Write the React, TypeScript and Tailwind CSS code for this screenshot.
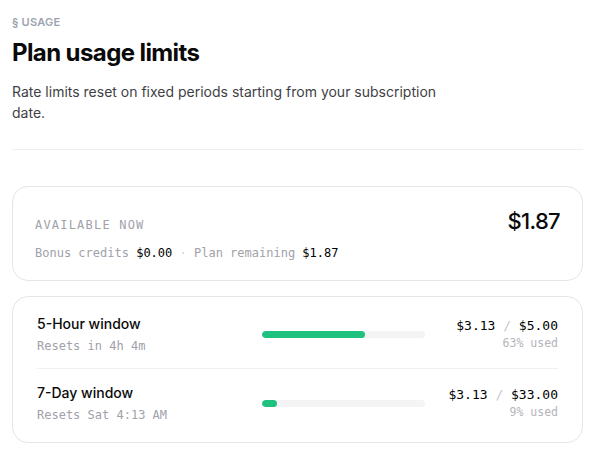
const sans = "font-['Inter','Noto_Sans',sans-serif]";
const mono = "font-['DejaVu_Sans_Mono','Liberation_Mono',monospace]";

type Window = {
  name: string;
  resets: string;
  used: string;
  limit: string;
  pct: number;
};

const windows: Window[] = [
  { name: "5-Hour window", resets: "Resets in 4h 4m", used: "$3.13", limit: "$5.00", pct: 63 },
  { name: "7-Day window", resets: "Resets Sat 4:13 AM", used: "$3.13", limit: "$33.00", pct: 9 },
];

export default function App() {
  return (
    <div className={`min-h-[468px] bg-white pl-3 pr-5 pt-[15px] ${sans}`}>
      {/* Header */}
      <section className="pb-[26px] border-b border-[#f0f0f2]">
        <div className="text-[11px] font-semibold text-[#9ca3af] leading-[14px] tracking-[0.02em]">§ USAGE</div>
        <h1 className="mt-[9px] text-[24px] leading-[30px] font-bold text-[#0a0a0a] tracking-[-0.025em]">
          Plan usage limits
        </h1>
        <p className="mt-[13px] max-w-[440px] text-[14px] leading-[21px] text-[#3f3f46]">
          Rate limits reset on fixed periods starting from your subscription date.
        </p>
      </section>

      {/* Available now */}
      <section className="mt-[36px] rounded-[16px] border border-[#e5e5e8] px-[22px] pt-[20px] pb-[19px]">
        <div className="flex items-baseline justify-between h-[28px]">
          <span className={`${mono} text-[12px] tracking-[0.1em] text-[#a1a1aa]`}>AVAILABLE NOW</span>
          <span className="text-[22px] leading-[28px] font-medium text-[#0a0a0a] tracking-[-0.03em]">$1.87</span>
        </div>
        <div className={`mt-[10px] ${mono} text-[12px] leading-[16px] text-[#a1a1aa]`}>
          Bonus credits <span className="text-[#000]">$0.00</span>
          <span className="text-[#d4d4d8]"> · </span>
          Plan remaining <span className="text-[#000]">$1.87</span>
        </div>
      </section>

      {/* Windows */}
      <section className="mt-[15px] rounded-[16px] border border-[#e5e5e8] px-[24px] pt-[3px] pb-[5px]">
        {windows.map((w, i) => (
          <div
            key={w.name}
            className={`flex items-center py-[14px] ${i > 0 ? "border-t border-[#f0f0f2]" : ""}`}
          >
            <div className="w-[225px]">
              <div className="text-[14px] leading-[20px] font-medium text-[#0a0a0a]">{w.name}</div>
              <div className={`mt-[4px] ${mono} text-[12px] leading-[16px] text-[#a1a1aa]`}>{w.resets}</div>
            </div>
            <div className="w-[163px] h-[7px] rounded-full bg-[#f4f4f5] overflow-hidden">
              <div className="h-full rounded-full bg-[#1ec27e]" style={{ width: `${w.pct}%` }} />
            </div>
            <div className={`flex-1 text-right ${mono}`}>
              <div className="text-[13px] leading-[18px] text-[#000]">
                {w.used} <span className="text-[#c4c8d0]">/</span> {w.limit}
              </div>
              <div className="text-[11.5px] leading-[16px] text-[#b4b4bc]">{w.pct}% used</div>
            </div>
          </div>
        ))}
      </section>
    </div>
  );
}
